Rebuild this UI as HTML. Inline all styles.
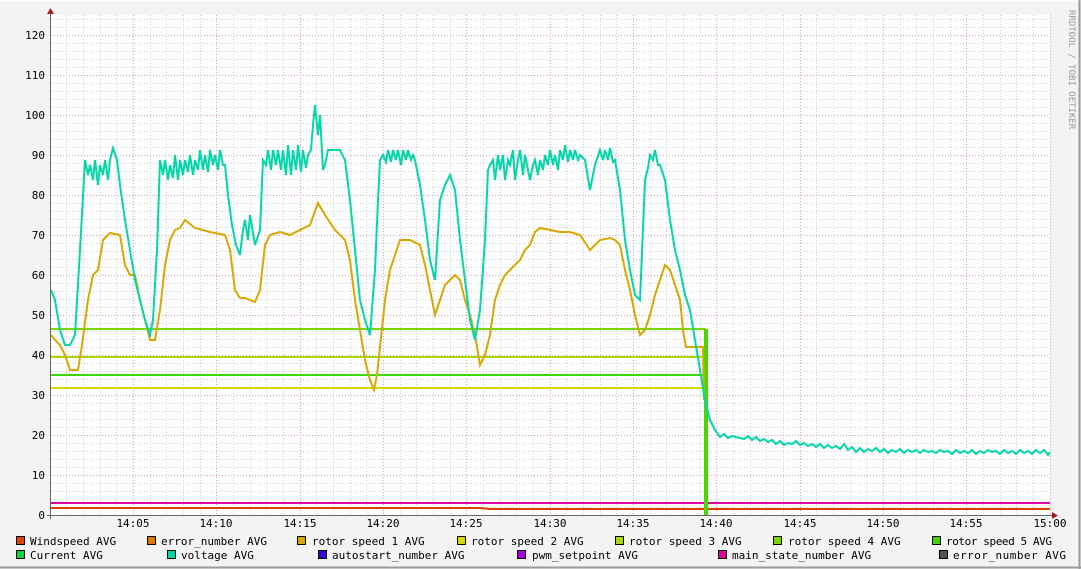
<!DOCTYPE html><html><head><style>
body{margin:0;background:#f3f3f3;}
svg{display:block;font-family:"DejaVu Sans Mono","Liberation Mono",monospace;}
</style></head><body>
<svg width="1081" height="569" xmlns="http://www.w3.org/2000/svg">
<rect width="1081" height="569" fill="#f3f3f3"/>
<line x1="0" y1="0.5" x2="1081" y2="0.5" stroke="#fcfcfc"/>
<line x1="1079.5" y1="0" x2="1079.5" y2="569" stroke="#9b9b9b" stroke-width="2"/>
<line x1="0" y1="567.5" x2="1081" y2="567.5" stroke="#9b9b9b" stroke-width="2"/>
<rect x="51" y="15" width="999" height="500" fill="#fff"/>
<g id="grid">
<path d="M51 507.5H1050M51 499.5H1050M51 491.5H1050M51 483.5H1050M51 467.5H1050M51 459.5H1050M51 451.5H1050M51 443.5H1050M51 427.5H1050M51 419.5H1050M51 411.5H1050M51 403.5H1050M51 387.5H1050M51 379.5H1050M51 371.5H1050M51 363.5H1050M51 347.5H1050M51 339.5H1050M51 331.5H1050M51 323.5H1050M51 307.5H1050M51 299.5H1050M51 291.5H1050M51 283.5H1050M51 267.5H1050M51 259.5H1050M51 251.5H1050M51 243.5H1050M51 227.5H1050M51 219.5H1050M51 211.5H1050M51 203.5H1050M51 187.5H1050M51 179.5H1050M51 171.5H1050M51 163.5H1050M51 147.5H1050M51 139.5H1050M51 131.5H1050M51 123.5H1050M51 107.5H1050M51 99.5H1050M51 91.5H1050M51 83.5H1050M51 67.5H1050M51 59.5H1050M51 51.5H1050M51 43.5H1050M51 27.5H1050M51 19.5H1050" stroke="#d0d0d0" stroke-dasharray="1,2"/>
<path d="M66.5 15V515M83.5 15V515M100.5 15V515M116.5 15V515M150.5 15V515M166.5 15V515M183.5 15V515M200.5 15V515M233.5 15V515M250.5 15V515M266.5 15V515M283.5 15V515M316.5 15V515M333.5 15V515M350.5 15V515M366.5 15V515M400.5 15V515M416.5 15V515M433.5 15V515M450.5 15V515M483.5 15V515M500.5 15V515M516.5 15V515M533.5 15V515M566.5 15V515M583.5 15V515M600.5 15V515M616.5 15V515M650.5 15V515M666.5 15V515M683.5 15V515M700.5 15V515M733.5 15V515M750.5 15V515M766.5 15V515M783.5 15V515M816.5 15V515M833.5 15V515M850.5 15V515M866.5 15V515M900.5 15V515M916.5 15V515M933.5 15V515M950.5 15V515M983.5 15V515M1000.5 15V515M1016.5 15V515M1033.5 15V515" stroke="#d0d0d0" stroke-dasharray="1,2"/>
<path d="M51 475.5H1050M51 435.5H1050M51 395.5H1050M51 355.5H1050M51 315.5H1050M51 275.5H1050M51 235.5H1050M51 195.5H1050M51 155.5H1050M51 115.5H1050M51 75.5H1050M51 35.5H1050" stroke="#e8a0a0" stroke-dasharray="1,2"/>
<path d="M133.5 15V515M216.5 15V515M300.5 15V515M383.5 15V515M466.5 15V515M550.5 15V515M633.5 15V515M716.5 15V515M800.5 15V515M883.5 15V515M966.5 15V515M1050.5 15V515" stroke="#e8a0a0" stroke-dasharray="1,2"/>
</g>
<path d="M51 503H1050" stroke="#e000a0" stroke-width="2"/>
<path d="M51 508H480L490 509H1050" stroke="#e04000" stroke-width="2"/>
<path d="M51 329H706" stroke="#78d800" stroke-width="2"/>
<path d="M51 357H706" stroke="#a8d800" stroke-width="2"/>
<path d="M51 375H706" stroke="#3cd800" stroke-width="2"/>
<path d="M51 388H704" stroke="#d8d800" stroke-width="2"/>
<rect x="704" y="329" width="4" height="186" fill="#48d800"/>
<polyline fill="none" stroke="#d8a800" stroke-width="2" points="51,335 55,340 60,345 65,355 70,370 78,370 82,345 88,300 93,275 98,270 103,240 110,233 120,235 125,265 130,275 135,275 140,300 145,320 150,340 155,340 160,310 165,265 170,240 175,230 180,228 185,220 195,228 210,232 225,235 230,250 235,290 240,298 245,298 250,300 255,302 260,290 265,245 270,235 280,232 290,235 300,230 310,225 318,203 325,215 335,230 345,240 350,260 355,300 360,330 365,360 370,380 374,390 377,375 385,300 390,270 395,255 400,240 410,240 420,245 425,265 430,290 435,315 440,300 445,285 450,280 455,275 460,280 465,300 470,315 475,335 480,365 485,355 490,335 495,300 500,285 505,275 510,270 520,260 525,250 530,245 535,232 540,228 550,230 560,232 570,232 580,235 590,250 600,240 610,238 615,240 620,245 625,270 630,290 635,315 640,335 645,330 650,315 655,295 660,280 665,265 670,270 675,285 680,300 683,330 686,347 703,347 704,400"/>
<polyline fill="none" stroke="#00d8a8" stroke-width="2" points="51,290 55,300 60,330 65,345 70,345 75,335 80,250 85,160 88,175 90,165 93,180 95,160 98,185 100,165 103,175 105,160 108,180 110,160 113,148 117,160 120,185 125,220 130,250 135,280 140,300 145,320 150,335 153,320 157,250 160,160 163,175 165,160 168,180 170,165 173,178 175,155 178,180 180,160 183,175 185,160 188,172 190,155 193,175 195,160 198,170 200,150 203,170 205,155 208,172 210,150 213,165 215,155 218,170 220,150 223,165 225,165 228,195 232,225 236,245 240,255 243,230 245,220 248,240 250,215 255,245 260,230 263,160 266,165 268,150 271,170 273,150 276,165 278,150 281,170 283,150 286,175 288,145 291,175 293,150 296,170 298,145 301,172 303,150 306,168 308,155 311,150 313,125 315,105 318,135 320,115 323,170 325,165 328,150 330,150 340,150 345,160 350,200 355,250 360,300 365,320 370,335 375,270 378,200 380,160 383,155 386,162 388,150 391,162 393,150 396,160 398,150 401,165 403,150 406,160 408,150 411,160 413,155 415,160 420,185 425,220 430,260 435,280 440,200 445,185 450,175 455,190 460,240 465,280 470,320 475,340 480,310 485,240 488,170 490,165 493,160 495,180 498,155 500,170 503,155 505,180 508,160 510,165 513,150 515,180 518,160 520,150 523,175 525,155 528,170 530,180 533,165 535,160 538,175 540,160 543,170 545,155 548,165 550,150 553,165 555,155 558,170 560,150 563,160 565,145 568,162 570,150 573,160 575,150 578,160 580,155 585,160 590,190 595,165 600,150 603,160 605,150 608,160 610,148 613,162 615,160 620,190 625,240 630,270 635,295 640,300 645,180 648,168 650,155 653,160 655,150 658,165 660,165 665,180 670,220 675,250 680,270 685,295 690,310 695,340 700,370 705,400 710,420 715,430 720,437 724,434 728,438 732,436 736,437 740,438 744,439 748,436 752,440 756,437 760,441 764,439 768,442 772,440 776,444 780,441 784,445 788,443 792,444 796,441 800,445 804,443 808,446 812,444 816,447 820,444 824,448 828,445 832,448 836,446 840,449 844,444 848,450 852,447 856,452 860,448 864,452 868,449 872,451 876,448 880,452 884,449 888,453 892,450 896,452 900,449 904,453 908,450 912,452 916,450 920,453 924,450 928,452 932,451 936,453 940,450 944,452 948,451 952,454 956,450 960,453 964,451 968,453 972,450 976,454 980,451 984,453 988,450 992,452 996,451 1000,454 1004,450 1008,453 1012,451 1016,454 1020,450 1024,453 1028,451 1032,454 1036,450 1040,453 1044,450 1048,455 1050,452"/>
<line x1="50.5" y1="10" x2="50.5" y2="519" stroke="#666"/>
<line x1="47" y1="515.5" x2="1054" y2="515.5" stroke="#666"/>
<polygon points="47,14 54,14 50.5,8" fill="#a02020"/>
<polygon points="1052,512 1052,519 1058,515.5" fill="#a02020"/>
<g font-size="11" fill="#000" text-anchor="end">
<text x="45" y="519">0</text><text x="45" y="479">10</text><text x="45" y="439">20</text><text x="45" y="399">30</text><text x="45" y="359">40</text><text x="45" y="319">50</text><text x="45" y="279">60</text><text x="45" y="239">70</text><text x="45" y="199">80</text><text x="45" y="159">90</text><text x="45" y="119">100</text><text x="45" y="79">110</text><text x="45" y="39">120</text>
</g>
<g font-size="11" fill="#000" text-anchor="middle">
<text x="133" y="527">14:05</text><text x="216" y="527">14:10</text><text x="300" y="527">14:15</text><text x="383" y="527">14:20</text><text x="466" y="527">14:25</text><text x="550" y="527">14:30</text><text x="633" y="527">14:35</text><text x="716" y="527">14:40</text><text x="800" y="527">14:45</text><text x="883" y="527">14:50</text><text x="966" y="527">14:55</text><text x="1050" y="527">15:00</text>
</g>
<text transform="translate(1069,10) rotate(90)" font-size="9" fill="#999">RRDTOOL / TOBI OETIKER</text>
<g font-size="11" fill="#000" stroke="#000" stroke-width="1">
<rect x="16.5" y="536.5" width="8" height="8" fill="#e04000"/>
<rect x="147.5" y="536.5" width="8" height="8" fill="#e07800"/>
<rect x="297.5" y="536.5" width="8" height="8" fill="#d8a800"/>
<rect x="457.5" y="536.5" width="8" height="8" fill="#d8d800"/>
<rect x="615.5" y="536.5" width="8" height="8" fill="#a8d800"/>
<rect x="773.5" y="536.5" width="8" height="8" fill="#78d800"/>
<rect x="932.5" y="536.5" width="8" height="8" fill="#3cd800"/>
<rect x="16.5" y="550.5" width="8" height="8" fill="#00d83c"/>
<rect x="167.5" y="550.5" width="8" height="8" fill="#00d8a8"/>
<rect x="318.5" y="550.5" width="8" height="8" fill="#3c00d8"/>
<rect x="517.5" y="550.5" width="8" height="8" fill="#a800d8"/>
<rect x="718.5" y="550.5" width="8" height="8" fill="#e000a0"/>
<rect x="939.5" y="550.5" width="8" height="8" fill="#505050"/>
</g>
<g font-size="11" fill="#000">
<text x="30" y="545">Windspeed AVG</text>
<text x="161" y="545">error_number AVG</text>
<text x="312" y="545">rotor speed 1 AVG</text>
<text x="471" y="545">rotor speed 2 AVG</text>
<text x="629" y="545">rotor speed 3 AVG</text>
<text x="788" y="545">rotor speed 4 AVG</text>
<text x="946" y="545" textLength="106">rotor speed 5 AVG</text>
<text x="30" y="559">Current AVG</text>
<text x="181" y="559">voltage AVG</text>
<text x="332" y="559">autostart_number AVG</text>
<text x="532" y="559">pwm_setpoint AVG</text>
<text x="732" y="559">main_state_number AVG</text>
<text x="953" y="559" textLength="113">error_number AVG</text>
</g>
</svg>
</body></html>
